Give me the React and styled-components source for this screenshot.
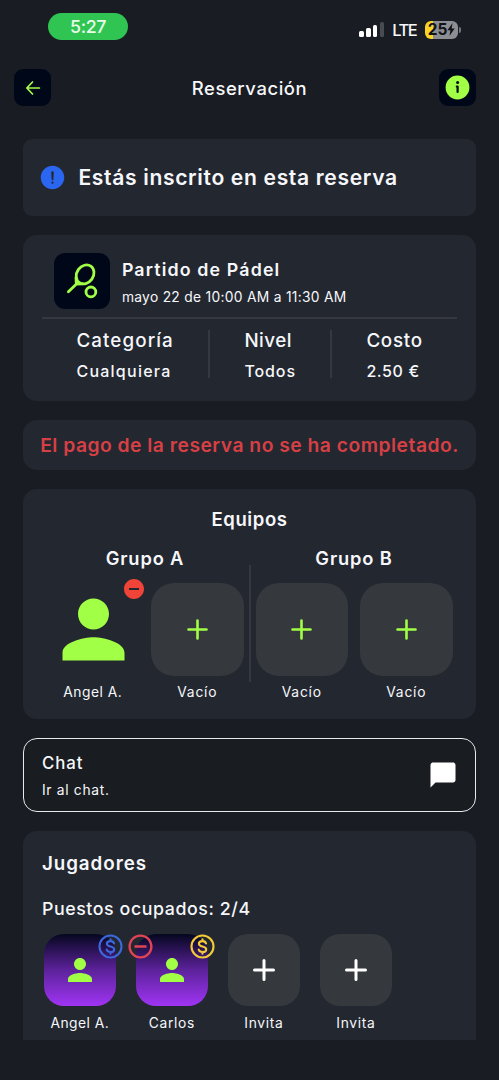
import React from "react";
import styled, { createGlobalStyle, css } from "styled-components";
import { MdPerson, MdChatBubble, MdRemoveCircle, MdRemoveCircleOutline } from "react-icons/md";
import { IoAlertCircle } from "react-icons/io5";

const Global = createGlobalStyle`
  * { box-sizing: border-box; }
  body { margin: 0; background: #191c23; }
`;

const lime = "#a1ff45";

const Screen = styled.div`
  width: 499px;
  height: 1080px;
  overflow: hidden;
  background: #191c23;
  color: #f6f7fa;
  font-family: Inter, "Liberation Sans", sans-serif;
  display: flex;
  flex-direction: column;
`;

const Text = styled.span`
  display: block;
  white-space: nowrap;
  font-size: ${(p) => p.$size}px;
  font-weight: ${(p) => p.$weight || 400};
  line-height: ${(p) => p.$line || 24}px;
  letter-spacing: ${(p) => p.$track || 0}px;
  color: ${(p) => p.$color || "inherit"};
`;

const StatusBar = styled.div`
  height: 52px;
  padding: 12.5px 38px 0 48px;
  display: flex;
  justify-content: space-between;
  align-items: flex-start;
`;

const TimePill = styled.div`
  width: 80px;
  height: 27px;
  padding-top: 1px;
  border-radius: 14px;
  background: #30c552;
  display: flex;
  align-items: center;
  justify-content: center;
  color: #e9fbe9;
`;

const StatusIcons = styled.div`
  height: 34px;
  display: flex;
  align-items: center;
`;

const Signal = styled.div`
  display: flex;
  align-items: flex-end;
  gap: 2.4px;
  margin-right: 8px;
`;

const Bar = styled.i`
  width: 4.5px;
  height: ${(p) => p.$h}px;
  border-radius: 1.5px;
  background: ${(p) => (p.$off ? "#484c51" : "#fff")};
`;

const Battery = styled.div`
  width: 33px;
  height: 18px;
  margin-left: 9px;
  border-radius: 6px;
  background: linear-gradient(90deg, #fbd425 8px, #8d8e93 8px);
  color: #111318;
  display: flex;
  align-items: center;
  justify-content: center;
`;

const Nub = styled.i`
  width: 2px;
  height: 6px;
  margin-left: 1px;
  border-radius: 0 2px 2px 0;
  background: #75777c;
`;

const Header = styled.header`
  height: 87px;
  padding: 17px 23.4px 0 14px;
  display: flex;
  justify-content: space-between;
  align-items: flex-start;
`;

const HeaderTitle = styled.h1`
  margin: 0 -9.4px 0 0;
  height: 37px;
  display: flex;
  align-items: center;
`;

const HeaderButton = styled.button`
  width: 37px;
  height: 37px;
  padding: 0;
  border: 0;
  border-radius: 9px;
  background: #000719;
  color: ${lime};
  display: grid;
  place-items: center;
`;

const Content = styled.main`
  height: 901px;
  overflow: hidden;
  padding: 0 23.4px;
  display: flex;
  flex-direction: column;
  gap: 19px;
`;

const Card = styled.section`
  flex: none;
  height: ${(p) => p.$h}px;
  border-radius: ${(p) => p.$r || 14}px;
  background: #232730;
`;

const NoticeCard = styled(Card)`
  display: flex;
  align-items: center;
  gap: 11.5px;
  padding: 1px 0 0 14.5px;
`;

const MatchCard = styled(Card)`
  padding: 18px 18.5px 0;
`;

const MatchHead = styled.div`
  display: flex;
  gap: 12px;
  height: 64px;
  padding-left: 12px;
`;

const SportTile = styled.div`
  width: 56px;
  height: 56px;
  border-radius: 11px;
  background: #000719;
`;

const MatchTitle = styled.div`
  padding-top: 5px;
`;

const Facts = styled.div`
  border-top: 2px solid #353841;
  padding-top: 10px;
  display: grid;
  grid-template-columns: 168px 122px 1fr;
`;

const Fact = styled.div`
  height: 56px;
  padding-left: 34.5px;
  position: relative;
  ${(p) => p.$divided && css`
    &::after {
      content: "";
      position: absolute;
      right: 0;
      top: 1px;
      width: 2px;
      height: 48px;
      background: #353841;
    }
  `}
`;

const WarningCard = styled(Card)`
  padding-top: 1px;
  display: flex;
  align-items: center;
  justify-content: center;
`;

const TeamsCard = styled(Card)`
  padding-top: 18.5px;
  display: flex;
  flex-direction: column;
  align-items: center;
`;

const Teams = styled.div`
  display: flex;
  margin-top: 14.8px;
`;

const Team = styled.div`
  width: 197px;
  display: flex;
  flex-direction: column;
  align-items: center;
`;

const TeamDivider = styled.div`
  width: 2px;
  height: 117px;
  margin: 19px 5px 0;
  background: #353841;
`;

const Slots = styled.div`
  display: flex;
  gap: ${(p) => p.$gap}px;
  margin-top: ${(p) => p.$top}px;
  padding-left: ${(p) => p.$left || 0}px;
`;

const Slot = styled.div`
  display: flex;
  flex-direction: column;
  align-items: center;
  gap: ${(p) => p.$gap}px;
  width: ${(p) => p.$w}px;
`;

const tileFill = {
  empty: "#35383d",
  none: "transparent",
  player: "linear-gradient(180deg, #05071f 0%, #5c229b 50%, #a034f4 100%)",
};

const Tile = styled.div`
  position: relative;
  width: 100%;
  height: ${(p) => p.$h}px;
  border-radius: ${(p) => p.$r}px;
  background: ${(p) => tileFill[p.$kind]};
  color: ${(p) => p.$color || lime};
  display: grid;
  place-items: center;
`;

const Badge = styled.span`
  position: absolute;
  top: ${(p) => p.$top}px;
  ${(p) => p.$side}: ${(p) => p.$offset}px;
  color: ${(p) => p.$color};
  display: flex;
`;

const ChatCard = styled.section`
  flex: none;
  height: 74px;
  border: 1.5px solid #e8eaec;
  border-radius: 14px;
  background: #191d21;
  padding: 3px 17px 0 17.5px;
  display: flex;
  align-items: center;
  justify-content: space-between;

  svg { margin-top: -3px; }
`;

const PlayersCard = styled(Card)`
  padding: 21px 18.5px 0;
`;

const Plus = ({ size, stroke }) => (
  <svg width={size} height={size} viewBox={`0 0 ${size} ${size}`} fill="none" stroke="currentColor" strokeWidth={stroke} strokeLinecap="round">
    <path d={`M${size / 2} 1.5V${size - 1.5}M1.5 ${size / 2}H${size - 1.5}`} />
  </svg>
);

const Coin = () => (
  <svg width="29" height="29" viewBox="0 0 29 29" fill="none" stroke="currentColor" strokeWidth="2.1" strokeLinecap="round">
    <circle cx="14.5" cy="14.5" r="11" />
    <path d="M18 11.4c-.4-1.5-1.700-2.300-3.500-2.300-2.100 0-3.600 1-3.600 2.600 0 3.800 7.300 1.900 7.300 5.700 0 1.600-1.500 2.600-3.700 2.600-2 0-3.400-.9-3.800-2.500M14.500 7.300v1.600M14.500 20.100v1.600" />
  </svg>
);

const BackArrow = () => (
  <svg width="16" height="16" viewBox="0 0 16 16" fill="none" stroke="currentColor" strokeWidth="1.7" strokeLinecap="round" strokeLinejoin="round">
    <path d="M7.5 2L1.8 8l5.7 6M2 8h12.4" />
  </svg>
);

const InfoMark = () => (
  <svg width="25" height="25" viewBox="0 0 25 25">
    <circle cx="12.5" cy="12.5" r="11.9" fill="currentColor" />
    <circle cx="12.6" cy="7.6" r="1.5" fill="#000719" />
    <path d="M11.8 11.6h.8v5.400" fill="none" stroke="#000719" strokeWidth="2.2" strokeLinecap="round" strokeLinejoin="round" />
  </svg>
);

const Racket = () => (
  <svg width="56" height="56" viewBox="0 0 56 56" fill="none" stroke={lime} strokeWidth="2.8" strokeLinecap="round" strokeLinejoin="round">
    <ellipse cx="31.1" cy="21.4" rx="8.3" ry="10" transform="rotate(35 31.1 21.4)" />
    <path d="M14.4 38.8L23.2 30.2M22 24.8l.3 6.2 6.2-.2" />
    <circle cx="36.9" cy="38.9" r="4.9" />
  </svg>
);

const Bolt = () => (
  <svg width="8" height="13" viewBox="0 0 8 13" fill="currentColor">
    <path d="M5.6 0L0.4 7.2H3.4L2.4 13L7.7 5.4H4.6Z" />
  </svg>
);

const TeamSlot = () => (
  <Slot $w={92.5} $gap={3.7}>
    <Tile $h={93} $r={23} $kind="empty"><Plus size={21} stroke={2.6} /></Tile>
    <Text $size={13.8} $track={0.8}>Vacío</Text>
  </Slot>
);

const InviteSlot = () => (
  <Slot $w={72} $gap={5.5}>
    <Tile $h={72} $r={20} $kind="empty" $color="#fff"><Plus size={22} stroke={3} /></Tile>
    <Text $size={13.8} $track={0.7}>Invita</Text>
  </Slot>
);

export default function App() {
  return (
    <Screen>
      <Global />
      <StatusBar>
        <TimePill><Text $size={17.8} $weight={500} $track={-0.4}>5:27</Text></TimePill>
        <StatusIcons>
          <Signal><Bar $h={6} /><Bar $h={9} /><Bar $h={12} /><Bar $h={15} $off /></Signal>
          <Text $size={16.5} $weight={500} $track={-1.6}>LTE</Text>
          <Battery><Text $size={15.5} $weight={700}>25</Text><Bolt /></Battery>
          <Nub />
        </StatusIcons>
      </StatusBar>
      <Header>
        <HeaderButton aria-label="Volver"><BackArrow /></HeaderButton>
        <HeaderTitle><Text $size={18.4} $weight={500} $track={0.6}>Reservación</Text></HeaderTitle>
        <HeaderButton aria-label="Información"><InfoMark /></HeaderButton>
      </Header>
      <Content>
        <NoticeCard $h={76.7} $r={9}>
          <IoAlertCircle size={29} color="#2a66f0" />
          <Text $size={21.1} $weight={600} $track={0.65}>Estás inscrito en esta reserva</Text>
        </NoticeCard>
        <MatchCard $h={166.3}>
          <MatchHead>
            <SportTile><Racket /></SportTile>
            <MatchTitle>
              <Text $size={17.8} $weight={600} $track={1.15}>Partido de Pádel</Text>
              <Text $size={13.8} $line={30} $track={0.3}>mayo 22 de 10:00 AM a 11:30 AM</Text>
            </MatchTitle>
          </MatchHead>
          <Facts>
            <Fact $divided>
              <Text $size={18.8} $weight={500} $track={1.1}>Categoría</Text>
              <Text $size={16} $weight={450} $line={37} $track={1.25}>Cualquiera</Text>
            </Fact>
            <Fact $divided>
              <Text $size={18.8} $weight={500} $track={0.5}>Nivel</Text>
              <Text $size={16} $weight={450} $line={37} $track={0.9}>Todos</Text>
            </Fact>
            <Fact>
              <Text $size={18.8} $weight={500} $track={0.7}>Costo</Text>
              <Text $size={16} $weight={450} $line={37} $track={0.6}>2.50 €</Text>
            </Fact>
          </Facts>
        </MatchCard>
        <WarningCard $h={49.7}>
          <Text $size={19.3} $weight={600} $track={0.49} $color="#d64045">El pago de la reserva no se ha completado.</Text>
        </WarningCard>
        <TeamsCard $h={230.3}>
          <Text $size={18.5} $weight={600} $track={0.6}>Equipos</Text>
          <Teams>
            <Team>
              <Text $size={18.3} $weight={600} $track={0.85}>Grupo A</Text>
              <Slots $gap={12} $top={13}>
                <Slot $w={92.5} $gap={3.7}>
                  <Tile $h={93} $r={23} $kind="none">
                    <MdPerson size={93} />
                    <Badge $top={-6} $side="right" $offset={-6.5} $color="#f04438"><MdRemoveCircle size={24} /></Badge>
                  </Tile>
                  <Text $size={13.8} $track={0.5}>Angel A.</Text>
                </Slot>
                <TeamSlot />
              </Slots>
            </Team>
            <TeamDivider />
            <Team>
              <Text $size={18.3} $weight={600} $track={0.85}>Grupo B</Text>
              <Slots $gap={12} $top={13}>
                <TeamSlot />
                <TeamSlot />
              </Slots>
            </Team>
          </Teams>
        </TeamsCard>
        <ChatCard>
          <div>
            <Text $size={16.8} $weight={450} $line={28} $track={1}>Chat</Text>
            <Text $size={13.8} $line={27} $track={0.7}>Ir al chat.</Text>
          </div>
          <MdChatBubble size={30} color="#fff" />
        </ChatCard>
        <PlayersCard $h={240}>
          <Text $size={18.8} $weight={600} $track={0.95}>Jugadores</Text>
          <Text $size={17.8} $weight={450} $line={65} $track={0.58}>Puestos ocupados: 2/4</Text>
          <Slots $gap={20} $top={-7} $left={2}>
            <Slot $w={72} $gap={5.5}>
              <Tile $h={72} $r={20} $kind="player">
                <MdPerson size={36} />
                <Badge $top={-2} $side="right" $offset={-9} $color="#3b68dc"><Coin /></Badge>
              </Tile>
              <Text $size={13.8} $track={0.5}>Angel A.</Text>
            </Slot>
            <Slot $w={72} $gap={5.5}>
              <Tile $h={72} $r={20} $kind="player">
                <MdPerson size={36} />
                <Badge $top={-2} $side="left" $offset={-9.5} $color="#e04455"><MdRemoveCircleOutline size={29} /></Badge>
                <Badge $top={-2} $side="right" $offset={-9} $color="#f2cb37"><Coin /></Badge>
              </Tile>
              <Text $size={13.8} $track={0.7}>Carlos</Text>
            </Slot>
            <InviteSlot />
            <InviteSlot />
          </Slots>
        </PlayersCard>
      </Content>
    </Screen>
  );
}
